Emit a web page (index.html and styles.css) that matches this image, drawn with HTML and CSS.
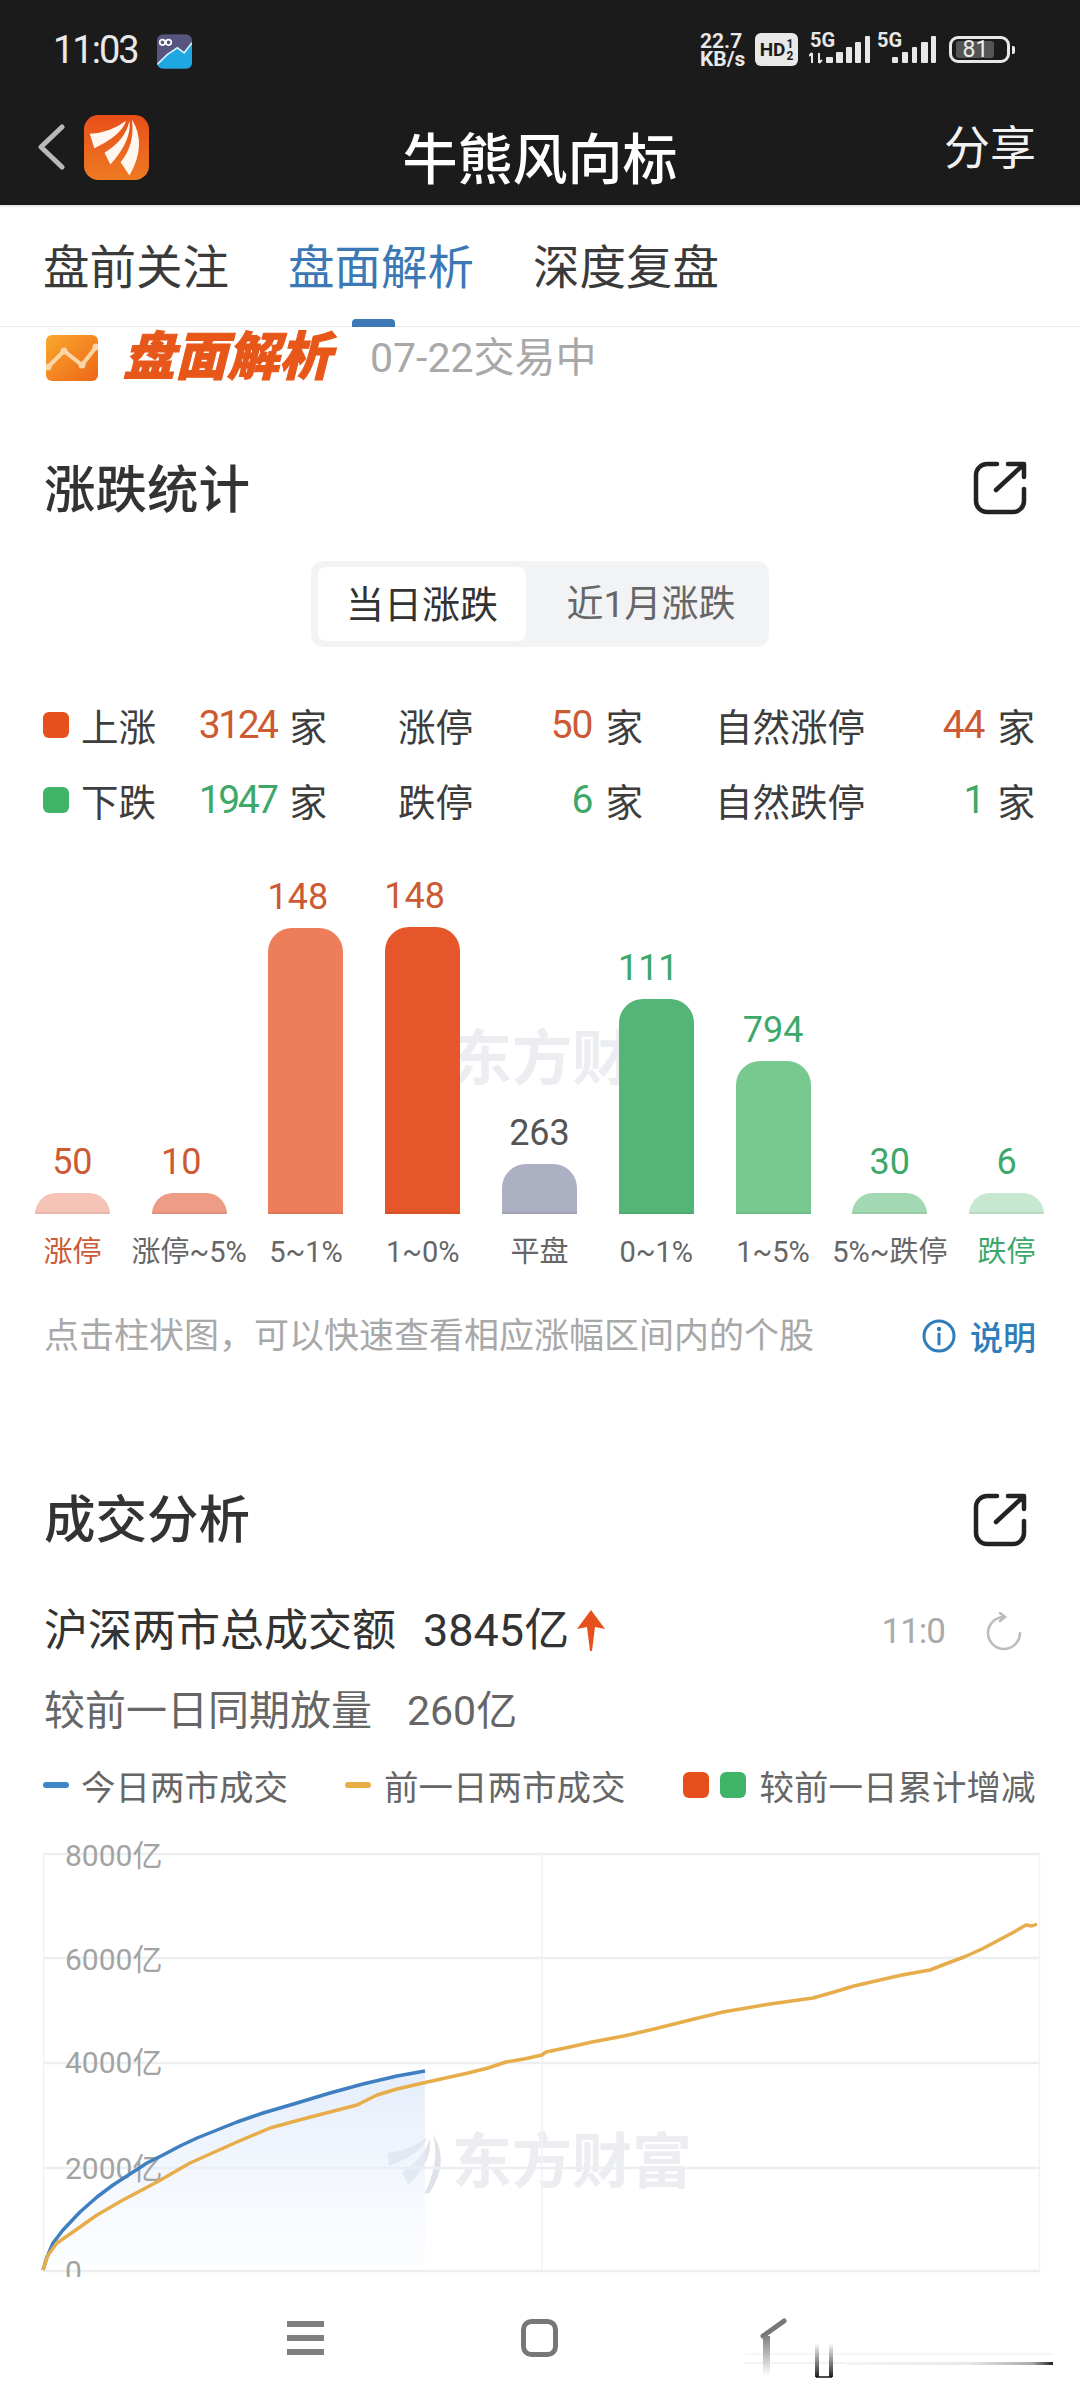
FILE: index.html
```html
<!DOCTYPE html>
<html lang="zh-CN">
<head>
<meta charset="utf-8">
<title>牛熊风向标</title>
<link rel="stylesheet" href="styles.css">
</head>
<body>
<div class="screen">
  <header class="topbar">
    <div class="status">
      <span class="clock">11:03</span>
      <svg class="app-badge" viewBox="465 100 103 102">
        <defs><clipPath id="badgeClip"><rect x="465" y="100" width="103" height="102" rx="18"/></clipPath></defs>
        <g clip-path="url(#badgeClip)">
          <rect x="465" y="100" width="103" height="102" fill="#55557f"/>
          <polygon points="465,190 495,160 525,140 545,155 568,125 568,202 465,202" fill="#1ea7e1"/>
          <polyline points="465,190 495,160 525,140 545,155 568,125" fill="none" stroke="#d5f1ff" stroke-width="5"/>
          <circle cx="481" cy="124" r="8" fill="none" stroke="#fff" stroke-width="5"/>
          <circle cx="499" cy="124" r="8" fill="none" stroke="#fff" stroke-width="5"/>
        </g>
      </svg>
      <div class="status-right">
        <div class="netspeed"><span>22.7</span><span>KB/s</span></div>
        <div class="hd"><span>HD</span><span class="hd-sims"><i>1</i><i>2</i></span></div>
        <svg class="signal" viewBox="809 20 128 46">
          <text x="810" y="47" class="sig-text">5G</text>
          <path d="M812 53v10M809 56l3-3M819 53v10M822 60l-3 3" stroke="#e8e8e8" stroke-width="2" fill="none"/>
          <rect x="826" y="57" width="7" height="6" rx="1"/><rect x="836" y="52" width="7" height="11" rx="1"/>
          <rect x="846" y="47" width="6" height="16" rx="1"/><rect x="855" y="42" width="6" height="21" rx="1"/>
          <rect x="865" y="36" width="5" height="27" rx="1"/>
          <text x="877" y="47" class="sig-text">5G</text>
          <rect x="892" y="57" width="6" height="6" rx="1"/><rect x="902" y="52" width="6" height="11" rx="1"/>
          <rect x="912" y="47" width="5" height="16" rx="1"/><rect x="921" y="42" width="7" height="21" rx="1"/>
          <rect x="931" y="36" width="5" height="27" rx="1"/>
        </svg>
        <div class="battery"><div class="battery-body"><span class="battery-fill"></span><span class="battery-num">81</span></div><span class="battery-cap"></span></div>
      </div>
    </div>
    <div class="navbar">
      <div class="nav-left">
        <svg class="back" viewBox="0 0 27 46"><polyline points="24,3 3,23 24,43" fill="none" stroke="#b9b9b9" stroke-width="5" stroke-linecap="round" stroke-linejoin="round"/></svg>
        <svg class="brand" viewBox="255 345 190 190">
          <defs><linearGradient id="brandFill" x1="0" y1="0" x2="0" y2="1"><stop offset="0" stop-color="#e84f1a"/><stop offset="1" stop-color="#ee7a22"/></linearGradient></defs>
          <rect x="255" y="345" width="190" height="190" rx="42" fill="url(#brandFill)"/>
          <path d="M272 400Q330 398 378 362Q365 405 285 442Z" fill="#fff7f0"/>
          <path d="M315 455Q375 420 388 362Q395 420 332 490Z" fill="#fff7f0"/>
          <path d="M362 483Q405 430 395 358Q440 430 388 522Z" fill="#fff7f0"/>
        </svg>
      </div>
      <h1 class="page-title">牛熊风向标</h1>
      <span class="share">分享</span>
    </div>
  </header>

  <nav class="tabs">
    <span class="tab">盘前关注</span>
    <span class="tab tab-active">盘面解析</span>
    <span class="tab">深度复盘</span>
  </nav>

  <div class="banner">
    <svg class="banner-icon" viewBox="46 335 52 46">
      <defs><linearGradient id="bannerFill" x1="0" y1="0" x2="1" y2="1"><stop offset="0" stop-color="#f9a92c"/><stop offset="1" stop-color="#ee6518"/></linearGradient></defs>
      <rect x="46" y="335" width="52" height="46" rx="6" fill="url(#bannerFill)"/>
      <polyline points="48,367 64,351 82,365 96,347" fill="none" stroke="#fbd5a5" stroke-width="4"/>
      <circle cx="64" cy="351" r="3.5" fill="#fbd5a5"/><circle cx="82" cy="365" r="3.5" fill="#fbd5a5"/><circle cx="96" cy="347" r="3.5" fill="#fbd5a5"/><circle cx="48" cy="367" r="3.5" fill="#fbd5a5"/>
    </svg>
    <span class="banner-title">盘面解析</span>
    <span class="banner-date">07-22交易中</span>
  </div>

  <section>
    <div class="section-head section-head-first">
      <h2>涨跌统计</h2>
      <svg class="open-icon" viewBox="0 0 54 54"><path d="M24 3H14A11 11 0 0 0 3 14V40A11 11 0 0 0 14 51H40A11 11 0 0 0 51 40V28M23 29L50 4M35 3H51V16" fill="none" stroke="#222" stroke-width="4.5" stroke-linecap="round" stroke-linejoin="round"/></svg>
    </div>

    <div class="segment">
      <span class="seg seg-on">当日涨跌</span>
      <span class="seg">近1月涨跌</span>
    </div>

    <div class="stats">
      <div class="stat-row">
        <div class="stat stat-a"><i class="swatch up-bg"></i><span>上涨</span><b class="num num-long up">3124</b><span class="unit">家</span></div>
        <div class="stat stat-b"><span>涨停</span><b class="num up">50</b><span class="unit">家</span></div>
        <div class="stat stat-c"><span>自然涨停</span><b class="num up">44</b><span class="unit">家</span></div>
      </div>
      <div class="stat-row">
        <div class="stat stat-a"><i class="swatch down-bg"></i><span>下跌</span><b class="num num-long down">1947</b><span class="unit">家</span></div>
        <div class="stat stat-b"><span>跌停</span><b class="num down">6</b><span class="unit">家</span></div>
        <div class="stat stat-c"><span>自然跌停</span><b class="num down">1</b><span class="unit">家</span></div>
      </div>
    </div>

    <div class="bars">
      <div class="watermark watermark-bars">
        <svg class="wm-logo" viewBox="45 60 180 195"><path d="M50 125Q120 118 172 75Q160 125 55 165Z"/><path d="M95 185Q165 140 180 80Q195 140 115 225Z"/><path d="M165 250Q215 150 190 65Q245 150 180 250Z"/></svg>
        <span>东方财富</span>
      </div>
      <div class="bar-col"><span class="val up">50</span><i class="bar c1" style="height:21px"></i></div>
      <div class="bar-col"><span class="val up lead">10</span><i class="bar c2" style="height:21px"></i></div>
      <div class="bar-col"><span class="val up lead">148</span><i class="bar c3" style="height:286px"></i></div>
      <div class="bar-col"><span class="val up lead">148</span><i class="bar c4" style="height:287px"></i></div>
      <div class="bar-col"><span class="val flat">263</span><i class="bar c5" style="height:50px"></i></div>
      <div class="bar-col"><span class="val down lead">111</span><i class="bar c6" style="height:215px"></i></div>
      <div class="bar-col"><span class="val down">794</span><i class="bar c7" style="height:153px"></i></div>
      <div class="bar-col"><span class="val down">30</span><i class="bar c8" style="height:21px"></i></div>
      <div class="bar-col"><span class="val down">6</span><i class="bar c9" style="height:21px"></i></div>
    </div>
    <div class="bar-labels">
      <span class="up">涨停</span><span>涨停~5%</span><span>5~1%</span><span>1~0%</span><span>平盘</span><span>0~1%</span><span>1~5%</span><span>5%~跌停</span><span class="down">跌停</span>
    </div>

    <div class="hint">
      <span class="hint-text">点击柱状图，可以快速查看相应涨幅区间内的个股</span>
      <span class="explain">
        <svg class="info-icon" viewBox="0 0 34 34"><circle cx="17" cy="17" r="15" fill="none" stroke="#2f7dbb" stroke-width="3"/><circle cx="17" cy="10" r="2.2" fill="#2f7dbb"/><path d="M17 15V25" stroke="#2f7dbb" stroke-width="3" stroke-linecap="round"/></svg>
        说明
      </span>
    </div>
  </section>

  <section>
    <div class="section-head section-head-second">
      <h2>成交分析</h2>
      <svg class="open-icon" viewBox="0 0 54 54"><path d="M24 3H14A11 11 0 0 0 3 14V40A11 11 0 0 0 14 51H40A11 11 0 0 0 51 40V28M23 29L50 4M35 3H51V16" fill="none" stroke="#222" stroke-width="4.5" stroke-linecap="round" stroke-linejoin="round"/></svg>
    </div>

    <div class="turnover">
      <span class="turnover-name">沪深两市总成交额</span>
      <span class="turnover-value">3845亿</span>
      <svg class="rise-arrow" viewBox="0 0 28 41"><polygon points="14,0 28,19 18,17 15,41 13,41 10,17 0,19" fill="#e5501c"/></svg>
      <span class="turnover-time">11:0</span>
      <svg class="refresh" viewBox="0 0 40 40"><path d="M36 21A16 16 0 1 1 19 5M16 1L21 5L16 9" fill="none" stroke="#bdbdbd" stroke-width="2.6" stroke-linecap="round"/></svg>
    </div>
    <div class="delta"><span>较前一日同期放量</span><span class="delta-value">260亿</span></div>

    <div class="legend">
      <i class="dash dash-blue"></i><span class="legend-a">今日两市成交</span>
      <i class="dash dash-yellow"></i><span class="legend-b">前一日两市成交</span>
      <i class="swatch up-bg"></i><i class="swatch down-bg swatch-next"></i><span class="legend-c">较前一日累计增减</span>
    </div>

    <div class="line-chart">
      <div class="watermark watermark-line">
        <svg class="wm-logo" viewBox="45 60 180 195"><path d="M50 125Q120 118 172 75Q160 125 55 165Z"/><path d="M95 185Q165 140 180 80Q195 140 115 225Z"/><path d="M165 250Q215 150 190 65Q245 150 180 250Z"/></svg>
        <span>东方财富</span>
      </div>
      <svg class="plot" viewBox="0 1838 1080 450">
        <defs><linearGradient id="areaFill" x1="0" y1="0" x2="0" y2="1"><stop offset="0" stop-color="#d6e4f8" stop-opacity=".65"/><stop offset="0.95" stop-color="#f6f9fe" stop-opacity=".4"/></linearGradient></defs>
        <g class="grid">
          <path d="M43 1854H1040M43 1958H1040M43 2063H1040M43 2168H1040M43 2271H1040"/>
          <path class="grid-thin" d="M43.5 1854V2271M542 1854V2271M1039.5 1854V2271"/>
        </g>
        <polygon fill="url(#areaFill)" points="43,2270 47,2257 53,2243 63,2230 80,2212 97,2197 113,2185 130,2174 147,2163 163,2155 180,2146 197,2138 217,2130 237,2122 263,2113 297,2103 330,2093 363,2084 397,2076 425,2071 425,2265 43,2265"/>
        <g class="axis">
          <text x="65" y="1866">8000亿</text>
          <text x="65" y="1970">6000亿</text>
          <text x="65" y="2073">4000亿</text>
          <text x="65" y="2179">2000亿</text>
          <text x="65" y="2282">0</text>
        </g>
        <polyline class="line-today" points="43,2270 47,2257 53,2243 63,2230 80,2212 97,2197 113,2185 130,2174 147,2163 163,2155 180,2146 197,2138 217,2130 237,2122 263,2113 297,2103 330,2093 363,2084 397,2076 425,2071"/>
        <polyline class="line-prev" points="43,2270 48,2255 57,2243 73,2232 97,2215 123,2200 157,2182 190,2163 237,2142 270,2128 303,2119 330,2112 357,2105 377,2095 397,2089 423,2083 450,2077 468,2073 488,2068 506,2062 524,2059 542,2055 546,2052 570,2047 592,2042 624,2036 654,2029 690,2020 723,2012 770,2004 813,1998 834,1992 854,1986 880,1980 902,1975 930,1970 948,1963 964,1957 982,1949 999,1940 1014,1932 1026,1925 1032,1926 1037,1924"/>
      </svg>
    </div>
  </section>

  <footer class="softkeys">
    <svg class="key key-menu" viewBox="0 0 37 36"><path d="M0 4H37M0 18H37M0 32H37" stroke="#808080" stroke-width="6"/></svg>
    <svg class="key key-home" viewBox="0 0 37 38"><rect x="2.5" y="2.5" width="32" height="33" rx="8" fill="none" stroke="#777" stroke-width="5"/></svg>
    <svg class="key key-back" viewBox="744 2300 312 90">
      <defs>
        <linearGradient id="fadeDown" x1="0" y1="0" x2="0" y2="1"><stop offset="0" stop-color="#808080"/><stop offset="1" stop-color="#fff"/></linearGradient>
        <linearGradient id="fadeUp" x1="0" y1="1" x2="0" y2="0"><stop offset="0" stop-color="#222"/><stop offset="1" stop-color="#fff"/></linearGradient>
        <linearGradient id="fadeRight" x1="0" y1="0" x2="1" y2="0"><stop offset="0" stop-color="#f4f4f4"/><stop offset="0.6" stop-color="#e8e8e8"/><stop offset="0.9" stop-color="#aaa"/><stop offset="1" stop-color="#222"/></linearGradient>
      </defs>
      <rect x="745" y="2353" width="308" height="2" fill="#f6f6f6"/>
      <rect x="745" y="2362" width="100" height="2" fill="#f3f3f3"/>
      <rect x="847" y="2362" width="206" height="3" fill="url(#fadeRight)"/>
      <path d="M784 2321L763 2336" stroke="#777" stroke-width="5" stroke-linecap="round" fill="none"/>
      <rect x="763" y="2336" width="7" height="40" fill="url(#fadeDown)"/>
      <rect x="815" y="2343" width="4" height="34" fill="url(#fadeUp)"/>
      <rect x="829" y="2343" width="4" height="34" fill="url(#fadeUp)"/>
      <path d="M816 2377H832" stroke="#111" stroke-width="1.5"/>
    </svg>
  </footer>
</div>
</body>
</html>
```
FILE: styles.css
```css
* { box-sizing: border-box; }

html, body { margin: 0; padding: 0; background: #fff; }

body {
  font-family: Roboto, "Noto Sans CJK SC", sans-serif;
  color: #333;
}

i { font-style: normal; display: block; }

.screen {
  position: relative;
  width: 1080px;
  height: 2400px;
  overflow: hidden;
  background: #fff;
}

/* dark header */
.topbar { background: #1b1b1b; height: 205px; color: #fff; box-shadow: 0 1px 3px rgba(0,0,0,.15); }

.status { height: 100px; display: flex; align-items: center; padding: 0 0 0 53px; position: relative; }
.clock { font-size: 38px; line-height: 100px; color: #e9e9e9; letter-spacing: -2px; }
.app-badge { width: 35px; height: 35px; margin-left: 19px; margin-top: 2px; }

.status-right { display: flex; align-items: flex-start; margin-left: auto; height: 100px; width: 380px; }
.netspeed { display: flex; flex-direction: column; width: 55px; margin-top: 32px; font-size: 21px; line-height: 18px; font-weight: 700; color: #e8e8e8; }
.hd { display: flex; align-items: center; justify-content: center; width: 43px; height: 33px; margin-top: 33px; background: #e8e8e8; border-radius: 6px; color: #1b1b1b; font-size: 19px; font-weight: 700; }
.hd-sims { display: flex; flex-direction: column; font-size: 12px; line-height: 12px; margin-left: 1px; }
.signal { width: 128px; height: 46px; margin: 20px 0 0 11px; fill: #e8e8e8; }
.sig-text { font-size: 20px; font-weight: 700; font-family: Roboto, sans-serif; }
.battery { display: flex; align-items: center; margin: 36px 0 0 12px; }
.battery-body { position: relative; width: 61px; height: 27px; border: 3px solid #e8e8e8; border-radius: 9px; }
.battery-fill { position: absolute; left: 4px; top: 2px; bottom: 2px; width: 38px; background: #555; border-radius: 3px; }
.battery-num { position: absolute; left: 0; right: 8px; top: -3px; line-height: 27px; text-align: center; font-size: 23px; color: #eee; }
.battery-cap { width: 3px; height: 8px; margin-left: 2px; background: #e8e8e8; border-radius: 0 2px 2px 0; }

.navbar { height: 105px; display: grid; grid-template-columns: 1fr auto 1fr; align-items: center; padding: 0 38px 11px 38px; }
.nav-left { display: flex; align-items: center; }
.back { width: 27px; height: 46px; }
.brand { width: 65px; height: 65px; margin-left: 19px; }
.page-title { margin: 26px 0 0; font-size: 55px; line-height: 64px; font-weight: 500; color: #fff; }
.share { justify-self: end; font-size: 46px; line-height: 60px; color: #f2f2f2; margin: 2px 6px 0 0; }

/* tab strip */
.tabs { position: relative; height: 122px; display: flex; align-items: flex-start; gap: 59px; padding: 0 0 0 43px; border-bottom: 1px solid #eceef0; }
.tab { height: 121px; font-size: 46.5px; line-height: 126px; color: #3a3a3a; }
.tab-active { position: relative; color: #3b78b5; }
.tab-active::after { content: ""; position: absolute; left: 64px; bottom: -1px; width: 43px; height: 8px; background: #3b78b5; border-radius: 4px 4px 0 0; }

.banner { display: flex; align-items: center; height: 62px; padding-left: 46px; }
.banner-icon { width: 52px; height: 46px; }
.banner-title { margin-left: 25px; font-size: 52px; line-height: 62px; font-weight: 900; font-style: italic; color: #e8571a; -webkit-text-stroke: 1px #e8571a; }
.banner-date { margin-left: 39px; font-size: 41px; line-height: 64px; color: #a8a8a8; }

/* section headers */
.section-head { display: flex; align-items: center; justify-content: space-between; height: 60px; padding: 0 53px 0 44px; }
.section-head-first { margin-top: 69px; }
.section-head-second { margin-top: 128px; }
.section-head h2 { margin: 6px 0 0; font-size: 51.5px; line-height: 60px; font-weight: 500; color: #333; }
.section-head-second h2 { margin-top: 2px; }
.open-icon { width: 54px; height: 54px; }

/* day / month switch */
.segment { display: flex; width: 458px; height: 86px; margin: 43px 0 0 311px; padding: 6px 7px; background: #f2f3f5; border-radius: 12px; }
.seg { font-size: 37px; line-height: 76px; color: #666; text-align: center; flex: 1; padding-left: 14px; }
.seg-on { flex: 0 0 208px; padding-left: 0; font-size: 38px; background: #fff; border-radius: 8px; color: #333; }

/* up / down counts */
.stats { margin-top: 40px; padding-left: 43px; }
.stat-row { display: flex; height: 75px; align-items: center; font-size: 37.5px; color: #3d3d3d; }
.stat { display: flex; align-items: center; }
.stat-a { width: 284px; }
.stat-b { width: 245px; margin-left: 71px; }
.stat-c { width: 320px; margin-left: 72px; }
.swatch { width: 26px; height: 26px; border-radius: 6px; margin-right: 12px; flex: none; }
.num { flex: 1; text-align: right; font-size: 39px; font-weight: 400; letter-spacing: -1px; }
.num-long { letter-spacing: -2.5px; }
.unit { margin-left: 13px; }
.up { color: #cc5a33; }
.down { color: #3ea86b; }
.flat { color: #555; }
.up-bg { background: #e5501c; }
.down-bg { background: #3fb368; }

/* distribution bars */
.bars { position: relative; display: grid; grid-template-columns: repeat(9, 1fr); height: 364px; margin-top: 13px; padding-left: 14px; width: 1065px; }
.bar-col { position: relative; display: flex; flex-direction: column; align-items: center; justify-content: flex-end; }
.val { font-size: 36px; line-height: 40px; margin-bottom: 11px; }
.val.lead { padding-right: 16px; }
.bar { width: 75px; border-radius: 24px 24px 0 0; box-shadow: inset 0 -2px 0 rgba(0,0,0,.06); }
.c1 { background: #f6c4b6; }
.c2 { background: #ee9c85; }
.c3 { background: #ee7d5b; }
.c4 { background: #e5562a; }
.c5 { background: #adafc2; }
.c6 { background: #53b677; }
.c7 { background: #78c990; }
.c8 { background: #a2d8b2; }
.c9 { background: #c6e7d0; }
.bar-labels { display: grid; grid-template-columns: repeat(9, 1fr); width: 1065px; padding-left: 14px; margin-top: 18px; font-size: 29px; line-height: 40px; text-align: center; color: #666; white-space: nowrap; }
.bar-labels span { justify-self: center; }

/* brand stamp behind the charts */
.watermark { position: absolute; display: flex; align-items: center; color: #ebedf1; font-size: 60px; line-height: 64px; font-weight: 700; }
.wm-logo { width: 58px; height: 63px; margin-right: 8px; fill: #dfe3e9; }
.watermark-bars { left: 386px; top: 178px; }
.watermark-line { left: 386px; top: 293px; }

.hint { display: flex; align-items: center; justify-content: space-between; height: 50px; margin-top: 40px; padding: 0 44px 0 44px; }
.hint-text { font-size: 35px; line-height: 50px; color: #a8a8a8; }
.explain { display: flex; align-items: center; font-size: 33px; font-weight: 500; color: #2f7dbb; margin-top: -3px; }
.info-icon { width: 34px; height: 34px; margin-right: 14px; }

/* turnover */
.turnover { display: flex; align-items: center; height: 60px; margin-top: 51px; padding-left: 44px; }
.turnover-name { font-size: 44px; line-height: 60px; color: #333; }
.turnover-value { margin-left: 27px; font-size: 45px; line-height: 60px; color: #333; }
.rise-arrow { width: 28px; height: 41px; margin: -2px 0 0 8px; }
.turnover-time { margin-left: auto; font-size: 35px; letter-spacing: -1px; color: #aaa; }
.refresh { width: 40px; height: 40px; margin: 2px 56px 0 39px; }

.delta { display: flex; height: 50px; margin-top: 25px; padding-left: 44px; font-size: 41px; line-height: 50px; color: #666; }
.delta-value { margin-left: 35px; }

.legend { display: flex; align-items: center; height: 44px; margin-top: 27px; padding-left: 43px; font-size: 34.5px; color: #666; }
.dash { width: 26px; height: 6px; border-radius: 3px; flex: none; }
.dash-blue { background: #3f86c9; }
.dash-yellow { background: #e8ae45; }
.legend-a { margin-left: 12px; }
.legend-b { margin-left: 13px; }
.legend .dash-yellow { margin-left: 57px; }
.legend .up-bg { margin: 0 11px 0 57px; }
.swatch-next { margin-right: 14px; }

/* line chart */
.line-chart { position: relative; height: 450px; margin-top: 31px; }
.plot { position: absolute; left: 0; top: 0; width: 1080px; height: 450px; }
.grid path { stroke: #eceef0; stroke-width: 2.5; fill: none; }
.grid .grid-thin { stroke: #f1f2f4; stroke-width: 1.5; }
.axis text { font-size: 30px; fill: #a3a3a3; font-family: Roboto, "Noto Sans CJK SC", sans-serif; }
.line-today { fill: none; stroke: #3f7fc0; stroke-width: 3.5; stroke-linejoin: round; }
.line-prev { fill: none; stroke: #e7ad4b; stroke-width: 3.5; stroke-linejoin: round; }

/* system navigation */
.softkeys { position: absolute; left: 0; right: 0; top: 2277px; bottom: 0; background: #fff; display: flex; align-items: flex-start; padding-left: 287px; }
.key { flex: none; }
.key-menu { width: 37px; height: 36px; margin-top: 43px; }
.key-home { width: 37px; height: 38px; margin: 42px 0 0 197px; }
.key-back { width: 312px; height: 90px; margin: 23px 0 0 186px; }
```
